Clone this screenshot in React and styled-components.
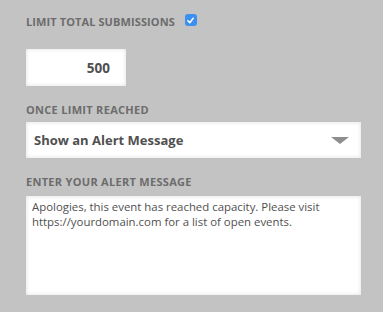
import React from 'react';
import styled, { createGlobalStyle } from 'styled-components';

const Global = createGlobalStyle`
  html, body {
    margin: 0;
    padding: 0;
    background: #c3c3c3;
  }
  body {
    font-family: "Open Sans", "Liberation Sans", sans-serif;
  }
`

const Panel = styled.div`
  display: flex;
  flex-direction: column;
  padding: 15px 22px 0 26px;
  width: 383px;
  box-sizing: border-box;
`

const Row = styled.div`
  display: flex;
  align-items: flex-start;
  gap: 10px;
`

const Label = styled.div`
  font-size: 11px;
  font-weight: 700;
  color: #6c6c6c;
  letter-spacing: ${p => p.$spacing ?? 0.3}px;
  line-height: 14px;
  margin-top: ${p => p.$top || 0}px;
`

const Check = styled.span`
  width: 12px;
  height: 12px;
  margin-top: -1px;
  border-radius: 3px;
  background: #3a8ff0;
  display: flex;
  align-items: center;
  justify-content: center;
`

const Box = styled.div`
  background: #fff;
  box-shadow: inset 0 0 4px rgba(0, 0, 0, 0.13);
  box-sizing: border-box;
  color: #505050;
`

const NumberBox = styled(Box)`
  width: 100px;
  height: 37px;
  margin-top: 20px;
  display: flex;
  align-items: center;
  justify-content: flex-end;
  padding-right: 16px;
  font-size: 13.5px;
  font-weight: 700;
`

const Select = styled(Box)`
  height: 36px;
  margin-top: 5px;
  display: flex;
  align-items: center;
  justify-content: space-between;
  padding: 0 12px 0 8px;
  font-size: 13px;
  font-weight: 700;
`

const Arrow = styled.span`
  width: 0;
  height: 0;
  border-left: 9px solid transparent;
  border-right: 9px solid transparent;
  border-top: 7px solid #8e8e8e;
`

const TextArea = styled(Box)`
  height: 99px;
  margin-top: 7px;
  padding: 3px 6px;
  font-size: 11.4px;
  line-height: 15px;
`

export default function App() {
  return (
    <Panel>
      <Global />
      <Row>
        <Label $spacing={0.1}>LIMIT TOTAL SUBMISSIONS</Label>
        <Check>
          <svg width="9" height="9" viewBox="0 0 10 10">
            <path d="M2 5.3 L4.2 7.4 L8 2.6" fill="none" stroke="#fff" strokeWidth="1.7" strokeLinecap="round" strokeLinejoin="round" />
          </svg>
        </Check>
      </Row>
      <NumberBox>500</NumberBox>
      <Label $top={17}>ONCE LIMIT REACHED</Label>
      <Select>
        <span>Show an Alert Message</span>
        <Arrow />
      </Select>
      <Label $top={17}>ENTER YOUR ALERT MESSAGE</Label>
      <TextArea>
        Apologies, this event has reached capacity. Please visit https://yourdomain.com for a list of open events.
      </TextArea>
    </Panel>
  );
}
